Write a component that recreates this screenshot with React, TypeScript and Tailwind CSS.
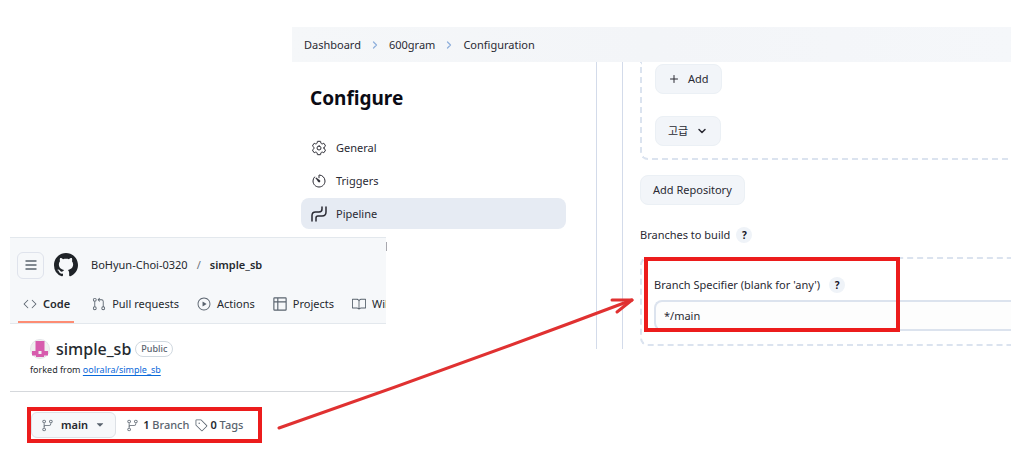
import React from "react";
import {
  GoBook,
  GoCode,
  GoGitBranch,
  GoGitPullRequest,
  GoPlay,
  GoTag,
  GoTriangleDown,
} from "react-icons/go";
import { IoSettingsOutline, IoTimerOutline } from "react-icons/io5";
import { ChevronDown, ChevronRight, Plus } from "lucide-react";

function PipelineIcon() {
  return (
    <svg viewBox="0 0 16 16" className="size-4" fill="none" stroke="currentColor" strokeWidth="1.5" strokeLinecap="round" aria-hidden="true">
      <path d="M1 15V9.500Q1 6 4.500 6H8Q11 6 11 3V1" />
      <path d="M5 15V12Q5 10 7 10H11Q15 10 15 6V1" />
    </svg>
  );
}

function TableIcon({ className }: { className?: string }) {
  return (
    <svg viewBox="0 0 16 16" className={className} fill="none" stroke="currentColor" strokeWidth="1.3" strokeLinejoin="round" aria-hidden="true">
      <path d="M1.750 1H14.250Q15 1 15 1.750V14.250Q15 15 14.250 15H1.750Q1 15 1 14.250V1.750Q1 1 1.750 1ZM1 5.500H15M5.500 1V15" />
    </svg>
  );
}

function GithubMark() {
  return (
    <svg viewBox="0 0 16 16" className="ml-[10px] size-6 text-[#1f2328]" fill="currentColor" aria-hidden="true">
      <path d="M6.766 11.328c-2.063-.25-3.516-1.734-3.516-3.656 0-.781.281-1.625.75-2.188-.203-.515-.172-1.609.063-2.062.625-.078 1.468.25 1.968.703.594-.187 1.219-.281 1.985-.281.765 0 1.39.094 1.953.265.484-.437 1.344-.765 1.969-.687.218.422.25 1.515.046 2.047.5.593.766 1.39.766 2.203 0 1.922-1.453 3.375-3.547 3.64.531.344.89 1.094.89 1.954v1.625c0 .468.391.734.859.547C13.781 14.359 16 11.53 16 8.03 16 3.61 12.406 0 7.984 0 3.563 0 0 3.61 0 8.031a7.88 7.88 0 0 0 5.172 7.422c.422.156.828-.125.828-.547v-1.25c-.219.094-.5.156-.75.156-1.031 0-1.64-.562-2.078-1.609-.172-.422-.36-.672-.719-.719-.187-.015-.25-.093-.25-.187 0-.188.313-.328.625-.328.453 0 .844.281 1.25.86.313.452.64.655 1.031.655s.641-.14 1-.5c.266-.265.47-.5.657-.656Z" />
    </svg>
  );
}

function Help({ topic }: { topic: string }) {
  return (
    <button type="button" aria-label={`Help for ${topic}`} className="flex size-4 items-center justify-center rounded-full bg-[#eff3f8] text-[10px] font-bold text-[#14141f]">
      ?
    </button>
  );
}

const sections = [
  { label: "General", icon: <IoSettingsOutline className="size-4 stroke-[12px]" /> },
  { label: "Triggers", icon: <IoTimerOutline className="size-4 stroke-[12px]" /> },
  { label: "Pipeline", icon: <PipelineIcon />, active: true },
];

const soft = "flex h-[30px] items-center rounded-lg border border-[#ebf0f5] bg-[#f2f5f9] px-3";

function JenkinsWindow() {
  return (
    <section className="ml-[292px] overflow-hidden font-['Noto_Sans','Noto_Sans_CJK_KR',sans-serif] text-[11px] leading-4 text-[#2a2a33]">
      <nav aria-label="Breadcrumb" className="flex h-[35px] items-center gap-2 bg-linear-to-r from-[#f5f7f9] via-[#f3f5f8] to-[#f5f7fa] px-3">
        <a href="#dashboard">Dashboard</a>
        <ChevronRight className="size-3 text-[#8fb0dc]" strokeWidth={2.5} />
        <a href="#600gram">600gram</a>
        <ChevronRight className="size-3 text-[#8fb0dc]" strokeWidth={2.5} />
        <a href="#configuration">Configuration</a>
      </nav>
      <div className="flex">
        <aside className="w-[305px] shrink-0 border-r border-[#d3dbea] pr-[30px] pl-[9px]">
          <h1 className="mt-6 ml-[9px] text-[19px] leading-6 font-bold text-[#0b0b14]">Configure</h1>
          <ul className="mt-[22px] flex flex-col gap-[2px]">
            {sections.map((s) => (
              <li key={s.label}>
                <a href={`#${s.label}`} className={s.active ? "flex h-[31px] items-center gap-[9px] rounded-lg bg-[#e6ebf3] px-[10px]" : "flex h-[31px] items-center gap-[9px] px-[10px]"}>
                  {s.icon}
                  {s.label}
                </a>
              </li>
            ))}
          </ul>
        </aside>
        <main className="ml-[25px] min-w-0 flex-1 border-l border-[#d3dbea] pb-[3px] pl-[17px]">
          <div className="flex flex-col items-start gap-[22px] rounded-bl-lg border-b-2 border-l-2 border-dashed border-[#dbe3ef] pt-[2px] pb-3 pl-[13px]">
            <button type="button" className={`${soft} gap-2`}>
              <Plus className="size-3" strokeWidth={2} />
              Add
            </button>
            <button type="button" className={`${soft} gap-2`}>
              고급
              <ChevronDown className="size-3" strokeWidth={3} />
            </button>
          </div>
          <button type="button" className={`${soft} mt-[15px]`}>Add Repository</button>
          <div className="mt-[22px] flex items-center gap-[6px]">
            Branches to build
            <Help topic="Branches to build" />
          </div>
          <div className="mt-[14px] rounded-l-lg border-2 border-r-0 border-dashed border-[#dbe3ef] pt-[18px] pb-[13px] pl-3">
            <div className="flex items-center gap-[9px]">
              <label htmlFor="branch">Branch Specifier (blank for 'any')</label>
              <Help topic="Branch Specifier" />
            </div>
            <input id="branch" defaultValue="*/main" className="mt-[7px] block h-[31px] w-full rounded-l-lg border-2 border-r-0 border-[#dce3ee] bg-[#fdfdfd] px-2 outline-none" />
          </div>
        </main>
      </div>
    </section>
  );
}

const tabs = [
  { label: "Code", icon: GoCode, active: true },
  { label: "Pull requests", icon: GoGitPullRequest },
  { label: "Actions", icon: GoPlay },
  { label: "Projects", icon: TableIcon },
  { label: "Wiki", icon: GoBook },
];

function GithubWindow() {
  return (
    <section className="absolute top-[237px] left-[10px] w-[376px] overflow-hidden bg-white font-['Noto_Sans',sans-serif] text-[11px] leading-4 text-[#25292e]">
      <header className="border-t border-b border-[#e3e8ed] bg-[#f6f8fa]">
        <div className="flex h-[54px] items-center pl-[7px]">
          <button type="button" aria-label="Open menu" className="flex size-[27px] items-center justify-center rounded-md border border-[#dfe3ec] text-[#59636e]">
            <svg viewBox="0 0 14 14" className="size-[14px]" stroke="currentColor" strokeWidth="1.4" strokeLinecap="round" aria-hidden="true">
              <path d="M2 3H12M2 7H12M2 11H12" />
            </svg>
          </button>
          <GithubMark />
          <a href="#owner" className="ml-[13px]">BoHyun-Choi-0320</a>
          <span className="mx-[9px] text-[#6b737c]">/</span>
          <a href="#repo" className="font-semibold">simple_sb</a>
        </div>
        <nav aria-label="Repository" className="flex h-[31px] gap-[17px] pl-2 whitespace-nowrap">
          {tabs.map(({ label, icon: Icon, active }) => (
            <a key={label} href={`#${label}`} className={active ? "flex items-start gap-[6px] border-b-2 border-[#fd8c73] pt-1 pr-1 pl-[5px] font-semibold" : "flex items-start gap-[6px] pt-1 pl-px"}>
              <Icon className="mt-px size-[14px] text-[#59636e]" />
              {label}
            </a>
          ))}
        </nav>
      </header>
      <div className="border-b border-[#d5d8dc] px-5 pt-[13px] pb-[13px]">
        <div className="flex items-center">
          <svg viewBox="0 0 20 20" className="size-5" aria-hidden="true">
            <circle cx="10" cy="10" r="9.500" fill="#f0f0f0" stroke="#e2e4e7" />
            <path fill="#d75bad" d="M5.500 2H14.500V12H18V16.500H14V18H6V16.500H2V12H5.500Z" />
            <path fill="#f0f0f0" d="M8.500 12H11.500V15H8.500Z" />
          </svg>
          <h2 className="ml-[6px] text-base leading-6 font-medium">simple_sb</h2>
          <span className="ml-1 rounded-full border border-[#d1d9e0] px-[5px] text-[9px] leading-[14px] font-medium text-[#59636e]">Public</span>
        </div>
        <p className="pt-px text-[9px] leading-4">
          forked from <a href="#upstream" className="text-[#0969da] underline underline-offset-2">oolralra/simple_sb</a>
        </p>
      </div>
      <div className="mt-[15px] ml-[17px] flex h-[36px] w-[235px] items-center border-4 border-[#ec1c1c] font-medium text-[#59636e]">
        <button type="button" className="flex h-[26px] items-center rounded-md border border-[#dde1e6] bg-[#f6f8fa] px-[9px] font-semibold text-[#25292e]">
          <GoGitBranch className="mr-[7px] size-[13px] text-[#59636e]" />
          main
          <GoTriangleDown className="ml-[6px] size-3 text-[#59636e]" />
        </button>
        <a href="#branches" className="ml-[10px] flex items-center gap-1">
          <GoGitBranch className="size-[13px]" />
          <span><b className="font-semibold text-[#25292e]">1</b> Branch</span>
        </a>
        <a href="#tags" className="ml-[6px] flex items-center gap-[2px]">
          <GoTag className="size-[13px]" />
          <span><b className="font-semibold text-[#25292e]">0</b> Tags</span>
        </a>
      </div>
    </section>
  );
}

export default function App() {
  return (
    <div className="relative min-h-screen overflow-hidden bg-white pt-[27px]">
      <JenkinsWindow />
      <div className="absolute top-[242px] left-[386px] h-[9px] w-px bg-[#a8a8ae]" />
      <GithubWindow />
      <div className="pointer-events-none absolute top-[257px] left-[644px] h-[75px] w-[256px] border-4 border-[#ec1c1c]" />
      <svg className="pointer-events-none absolute top-[290px] left-[270px] h-[150px] w-[370px]" viewBox="0 0 370 150" fill="none" stroke="#e03131" strokeWidth="3" strokeLinecap="round" strokeLinejoin="round" aria-hidden="true">
        <path d="M9 138Q187 76 362 10" />
        <path d="M342 10L362 10L347 22" />
      </svg>
    </div>
  );
}
